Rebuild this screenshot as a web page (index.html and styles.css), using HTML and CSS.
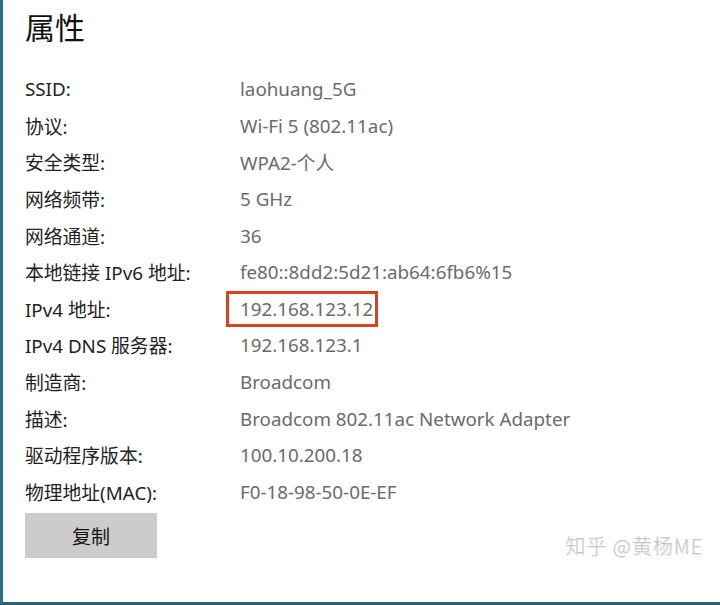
FILE: index.html
```html
<!DOCTYPE html>
<html>
<head>
  <meta charset="utf-8">
  <title>属性</title>
  <link rel="stylesheet" href="styles.css">
</head>
<body>
  <div class="window">
    <h1 class="title">属性</h1>
    <div class="props">
      <div class="label">SSID:</div><div class="value">laohuang_5G</div>
      <div class="label">协议:</div><div class="value">Wi-Fi 5 (802.11ac)</div>
      <div class="label">安全类型:</div><div class="value">WPA2-个人</div>
      <div class="label">网络频带:</div><div class="value">5 GHz</div>
      <div class="label">网络通道:</div><div class="value">36</div>
      <div class="label">本地链接 IPv6 地址:</div><div class="value">fe80::8dd2:5d21:ab64:6fb6%15</div>
      <div class="label">IPv4 地址:</div><div class="value marked">192.168.123.12</div>
      <div class="label">IPv4 DNS 服务器:</div><div class="value">192.168.123.1</div>
      <div class="label">制造商:</div><div class="value">Broadcom</div>
      <div class="label">描述:</div><div class="value">Broadcom 802.11ac Network Adapter</div>
      <div class="label">驱动程序版本:</div><div class="value">100.10.200.18</div>
      <div class="label">物理地址(MAC):</div><div class="value">F0-18-98-50-0E-EF</div>
    </div>
    <button class="copy-button" type="button">复制</button>
    <div class="watermark">知乎 @黄杨ME</div>
  </div>
</body>
</html>
```

FILE: styles.css
```css
body {
  margin: 0;
  padding: 0;
  background-color: #ffffff;
  font-family: "Noto Sans", "Noto Sans CJK SC", sans-serif;
}

.window {
  position: relative;
  box-sizing: border-box;
  width: 720px;
  height: 605px;
  padding: 8px 0 0 22px;
  border-left: 3px solid #2b6f8f;
  border-bottom: 3px solid #2f5f73;
  overflow: hidden;
}

.title {
  margin: 0;
  font-size: 30px;
  font-weight: normal;
  line-height: 40px;
  color: #111111;
}

.props {
  display: grid;
  grid-template-columns: 215px auto;
  grid-auto-rows: 36.6px;
  margin-top: 23px;
  font-size: 18.8px;
}

.label,
.value {
  display: flex;
  align-items: center;
  white-space: nowrap;
}

.label {
  color: #222222;
}

.value {
  color: #6b6b6b;
}

.marked {
  box-sizing: border-box;
  width: 152px;
  margin-left: -14px;
  padding-left: 11px;
  border: 3px solid #d64224;
}

.copy-button {
  display: block;
  width: 132px;
  height: 45px;
  margin-top: 3px;
  border: none;
  background-color: #cccccc;
  color: #111111;
  font-family: "Noto Sans CJK SC", sans-serif;
  font-size: 19px;
}

.watermark {
  position: absolute;
  right: 17px;
  bottom: 42px;
  font-family: "Noto Sans CJK SC", sans-serif;
  font-size: 20px;
  font-weight: 300;
  letter-spacing: 1px;
  color: #c6c6c6;
  text-shadow: 1px 1px 0 #ececec;
}
```
